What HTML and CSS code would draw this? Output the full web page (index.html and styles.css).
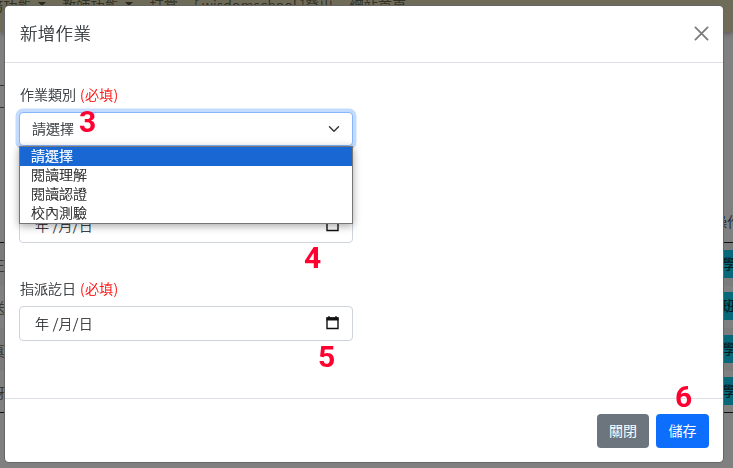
FILE: index.html
```html
<!DOCTYPE html>
<html lang="zh-Hant">
<head>
<meta charset="utf-8">
<title>新增作業</title>
<link rel="stylesheet" href="styles.css">
</head>
<body>
<div class="page">
  <nav class="nav"><span>務功能 <i class="caret"></i></span><span>教師功能 <i class="caret"></i></span><span>打賞</span><span>[ wisdomschool ]登出</span><span>網站首頁</span></nav>
  <div class="search"></div>
  <div class="thead"><span></span><span>操作</span></div>
  <div class="row first"><span class="name">王</span><b>學</b></div>
  <div class="row alt"><span class="name">送</span><b>班</b></div>
  <div class="row"><span class="name">真</span><b>學</b></div>
  <div class="row alt last"><span class="name">玡</span><b>學</b></div>
</div>
<div class="backdrop">
  <section class="modal">
    <header class="header">
      <h1>新增作業</h1>
      <svg class="close" viewBox="0 0 16 16"><path d="M1.5 1.5l13 13M14.5 1.5l-13 13" fill="none" stroke="#7b7b7b" stroke-width="1.9" stroke-linecap="round"/></svg>
    </header>
    <div class="body">
      <div class="field category">
        <label>作業類別 <em>(必填)</em></label>
        <div class="control select">
          <span>請選擇</span>
          <svg class="chevron" viewBox="0 0 16 16"><path d="M2 5l6 6 6-6" fill="none" stroke="#343a40" stroke-width="2" stroke-linecap="round" stroke-linejoin="round"/></svg>
          <ul class="options"><li class="selected">請選擇</li><li>閱讀理解</li><li>閱讀認證</li><li>校內測驗</li></ul>
        </div>
        <span class="mark m3">3</span>
      </div>
      <div class="field start">
        <div class="control date"><span>年 /月/日</span><svg class="cal" viewBox="0 0 13 14"><path d="M1 2h11v10.5H1z" fill="none" stroke="#111" stroke-width="1.4"/><path d="M.5 1.5h12v3H.5zM2.2.2h1.6V2H2.2zM9.2.2h1.6V2H9.2z" fill="#111"/></svg></div>
        <span class="mark m4">4</span>
      </div>
      <div class="field end">
        <label>指派訖日 <em>(必填)</em></label>
        <div class="control date"><span>年 /月/日</span><svg class="cal" viewBox="0 0 13 14"><path d="M1 2h11v10.5H1z" fill="none" stroke="#111" stroke-width="1.4"/><path d="M.5 1.5h12v3H.5zM2.2.2h1.6V2H2.2zM9.2.2h1.6V2H9.2z" fill="#111"/></svg></div>
        <span class="mark m5">5</span>
      </div>
    </div>
    <footer class="footer">
      <button class="btn secondary">關閉</button>
      <button class="btn primary">儲存</button>
      <span class="mark m6">6</span>
    </footer>
  </section>
</div>
</body>
</html>
```
FILE: styles.css
```css
* { box-sizing: border-box; }
body {
  margin: 0;
  width: 733px;
  height: 468px;
  overflow: hidden;
  background: #808080;
  color: #212529;
  font: 300 14px/20px "Noto Sans CJK TC", sans-serif;
  -webkit-text-stroke: .2px currentColor;
}
.page { height: 468px; overflow: hidden; }
.nav {
  display: flex;
  gap: 16px;
  height: 32px;
  background: #6e6c58;
  color: #2b2a22;
  box-shadow: 0 1px 6px #5d5050;
  white-space: nowrap;
}
.nav span { margin-top: -5px; letter-spacing: .25px; }
.nav span:first-child { margin-left: -11px; }
.caret {
  display: inline-block;
  margin: 0 0 5px 3px;
  border: 4px solid transparent;
  border-top-color: #2a2920;
  border-bottom: 0;
}
.search { width: 10px; height: 23px; margin: 53px 0 0; border: 1px solid #333; border-left: 0; }
.thead { display: flex; justify-content: space-between; height: 135px; padding-top: 103px; border-bottom: 1px solid #111; }
.thead span:last-child { margin-right: -8px; color: #15202c; }
.row { display: flex; justify-content: space-between; align-items: center; height: 43px; background: #7b7b7b; }
.row.alt { background: #808080; height: 42px; }
.row.last { border-bottom: 1px solid #111; }
.row .name { margin-left: -9px; color: #332d22; }
.row b {
  width: 20px;
  height: 28px;
  padding-left: 9px;
  margin-top: -2px;
  background: #076879;
  color: #061a20;
  font-weight: 400;
  line-height: 26px;
}
.backdrop { position: fixed; inset: 0; padding: 6px 10px 6px 5px; }
.modal {
  height: 456px;
  background: #fff;
  border-radius: 4px;
  box-shadow: 0 0 0 1px #666;
}
.header {
  display: flex;
  align-items: center;
  justify-content: space-between;
  height: 57px;
  padding: 0 14px 2px 15px;
  border-bottom: 1px solid #dee2e6;
}
h1 { margin: 0; font-size: 17.5px; font-weight: 300; letter-spacing: .3px; }
.close { width: 15px; height: 15px; }
.body { height: 335px; padding: 21px 14px 0; }
.field { position: relative; width: 334px; }
label { display: block; height: 28px; padding-left: 1px; white-space: pre; }
em { margin-left: 1px; color: #f00; font-style: normal; letter-spacing: .4px; }
.control {
  display: flex;
  align-items: center;
  justify-content: space-between;
  height: 35px;
  padding: 0 13px 2px 15px;
  border: 1px solid #ced4da;
  border-radius: 4px;
  background: #fff;
}
.control.select {
  position: relative;
  height: 34px;
  padding: 0 12px 0 12px;
  border-color: #86b7fe;
  box-shadow: 0 0 0 3.5px #c2dbfe;
}
.select > span { margin-top: -2px; }
.chevron { width: 12px; height: 12px; }
.options {
  position: absolute;
  z-index: 2;
  top: 33px;
  left: -1px;
  width: 334px;
  height: 78px;
  margin: 0;
  padding: 0;
  list-style: none;
  background: #fff;
  border: 1px solid #767676;
  box-shadow: 0 2px 8px rgba(0,0,0,.35);
}
.options li { height: 19px; padding-left: 11px; line-height: 17px; color: #111; }
.options .selected { background: #1967d2; color: #fff; font-weight: 400; }
.start { margin-top: 62px; }
.end { margin-top: 35px; }
.end label { height: 28px; }
.date span { letter-spacing: .3px; }
.cal { width: 13px; height: 14px; margin-top: 1px; }
.mark {
  position: absolute;
  z-index: 3;
  color: #ff0030;
  font: 700 30px/30px Roboto, sans-serif;
  -webkit-text-stroke: 0;
}
.m3 { left: 60px; top: 23px; }
.m4 { left: 285px; top: 35px; }
.m5 { left: 299px; top: 64px; }
.footer {
  position: relative;
  display: flex;
  justify-content: flex-end;
  gap: 7px;
  height: 64px;
  padding: 15px 14px 0 0;
  border-top: 1px solid #dee2e6;
}
.btn {
  width: 52px;
  height: 34px;
  padding: 0 0 2px;
  border: 0;
  border-radius: 4px;
  color: #fff;
  font: 400 14px/20px "Noto Sans CJK TC", sans-serif;
  -webkit-text-stroke: 0;
}
.primary { width: 53px; background: #0d6efd; }
.secondary { background: #6c757d; }
.m6 { left: 670px; top: -17px; }
```
